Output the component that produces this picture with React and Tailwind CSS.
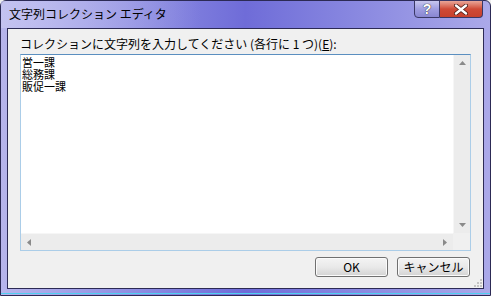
import React from 'react';

const jp = { fontFamily: '"Noto Sans CJK JP", "Liberation Sans", sans-serif' };

const Arrow = ({ dir }) => {
  // small grey scrollbar triangles
  const pts = {
    up: '0,4 3.5,0 7,4',
    down: '0,0 3.5,4 7,0',
    left: '4,0 0,3.5 4,7',
    right: '0,0 4,3.5 0,7',
  }[dir];
  const vertical = dir === 'up' || dir === 'down';
  return (
    <svg width={vertical ? 7 : 4} height={vertical ? 4 : 7} viewBox={vertical ? '0 0 7 4' : '0 0 4 7'}>
      <polygon points={pts} fill="#8a8a8a" />
    </svg>
  );
};

const VistaButton = ({ children }) => (
  <button
    className="w-[73px] h-[20px] rounded-[3px] border border-[#707070] bg-gradient-to-b from-[#f4f4f4] via-[#e9e9e9] to-[#d3d3d3] text-[12px] leading-none text-black shadow-[inset_0_0_0_1px_#fbfbfb]"
    style={jp}
  >
    {children}
  </button>
);

const App = () => {
  const lines = ['営一課', '総務課', '販促一課'];

  return (
    <div className="w-[491px] h-[296px] relative overflow-hidden bg-[#efefef]">
      {/* window frame */}
      <div className="w-full h-full flex flex-col border border-[#2c2a55] rounded-t-[6px] bg-gradient-to-r from-[#b7b5ec] via-[#6f6cd8] to-[#aba9e9]">
        {/* title bar */}
        <div className="h-[27px] flex items-start justify-between relative">
          <div className="absolute left-0 top-0 w-[200px] h-[27px] bg-gradient-to-r from-[#c9c8f2]/70 to-transparent" />
          <span className="relative mt-[5px] ml-[8px] text-[12px] leading-[16px] text-black" style={jp}>
            文字列コレクション エディタ
          </span>
          <div className="relative flex mr-[7px] -mt-px">
            <div className="w-[26px] h-[18px] rounded-bl-[4px] border border-[#3a3866] bg-gradient-to-b from-[#c8c7ee] via-[#9f9de0] to-[#8987d2] flex items-center justify-center">
              <span className="text-[14px] font-bold leading-none text-white" style={{ fontFamily: '"Liberation Sans", sans-serif', textShadow: '0 0 1px #333, 0 0 1px #333' }}>?</span>
            </div>
            <div className="w-[43px] h-[18px] rounded-br-[4px] border border-l-0 border-[#3a3866] bg-gradient-to-b from-[#e8a598] via-[#cf4a36] to-[#c7412d] flex items-center justify-center">
              <svg width="14" height="11" viewBox="0 0 14 11">
                <path d="M2 1.5 L12 9.5 M12 1.5 L2 9.5" stroke="#4a1a14" strokeWidth="4" strokeLinecap="round" />
                <path d="M2 1.5 L12 9.5 M12 1.5 L2 9.5" stroke="#ffffff" strokeWidth="2.4" strokeLinecap="round" />
              </svg>
            </div>
          </div>
        </div>

        {/* client area */}
        <div className="mx-[6px] flex-1 border border-[#2c2a55] bg-[#f0f0f0] flex flex-col px-[12px] pt-[7px] relative">
          <div className="h-[16px] text-[12px] leading-[16px] text-black whitespace-nowrap" style={jp}>
            コレクションに文字列を入力してください (各行に&nbsp;1&nbsp;つ)(<span className="underline">E</span>):
          </div>

          {/* text box */}
          <div className="mt-[2px] h-[197px] border border-[#abcde8] border-t-[#5b8fc0] bg-white flex flex-col">
            <div className="flex-1 flex">
              <div className="flex-1 pl-[1px] pt-[1px] text-[11px] leading-[12px] text-black" style={jp}>
                {lines.map((l) => (
                  <div key={l}>{l}</div>
                ))}
              </div>
              <div className="w-[17px] bg-[#ececec] border-l border-[#f6f6f6] flex flex-col items-center justify-between py-[6px]">
                <Arrow dir="up" />
                <Arrow dir="down" />
              </div>
            </div>
            <div className="h-[17px] flex">
              <div className="flex-1 bg-[#ececec] border-t border-[#f6f6f6] flex items-center justify-between px-[6px]">
                <Arrow dir="left" />
                <Arrow dir="right" />
              </div>
              <div className="w-[17px] bg-[#f0f0f0]" />
            </div>
          </div>

          {/* buttons */}
          <div className="mt-[6px] flex justify-end gap-[9px] pr-px">
            <VistaButton>OK</VistaButton>
            <VistaButton>キャンセル</VistaButton>
          </div>

          {/* resize grip */}
          <svg className="absolute right-[1px] bottom-[1px]" width="8" height="8" viewBox="0 0 8 8">
            {[[6, 0], [3, 3], [6, 3], [0, 6], [3, 6], [6, 6]].map(([x, y]) => (
              <rect key={`${x}-${y}`} x={x} y={y} width="2" height="2" fill="#c4c4c4" />
            ))}
          </svg>
        </div>

        {/* bottom frame */}
        <div className="h-[6px] relative">
          <div className="absolute left-0 right-0 bottom-[1px] h-px bg-[#4fd0f0]" />
        </div>
      </div>
    </div>
  );
};

export default App;
